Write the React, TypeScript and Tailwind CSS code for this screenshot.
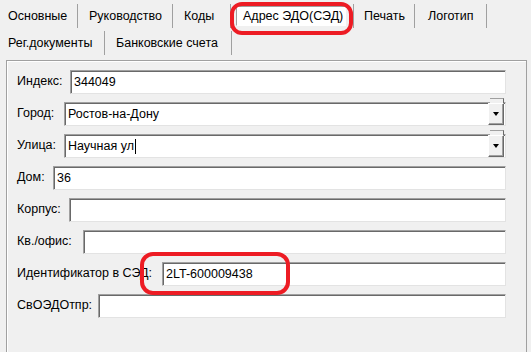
import React from "react";

type Tab = { label: string; w: number; pl: number; active?: boolean };

const row1: Tab[] = [
  { label: "Основные", w: 76, pl: 6 },
  { label: "Руководство", w: 95, pl: 11 },
  { label: "Коды", w: 58, pl: 11 },
  { label: "Адрес ЭДО(СЭД)", w: 123, pl: 12, active: true },
  { label: "Печать", w: 61, pl: 10 },
  { label: "Логотип", w: 72, pl: 13 },
];

const row2: Tab[] = [
  { label: "Рег.документы", w: 103, pl: 6 },
  { label: "Банковские счета", w: 127, pl: 11 },
];

type Field = { label: string; lw: number; value?: string; combo?: boolean; caret?: boolean };

const fields: Field[] = [
  { label: "Индекс:", lw: 53, value: "344049" },
  { label: "Город:", lw: 47, value: "Ростов-на-Дону", combo: true },
  { label: "Улица:", lw: 47, value: "Научная ул", combo: true, caret: true },
  { label: "Дом:", lw: 36, value: "36" },
  { label: "Корпус:", lw: 52 },
  { label: "Кв./офис:", lw: 66 },
  { label: "Идентификатор в СЭД:", lw: 145, value: "2LT-600009438" },
  { label: "СвОЭДОтпр:", lw: 81 },
];

function TabRow({ tabs }: { tabs: Tab[] }) {
  return (
    <div className="flex h-[24px] pl-[2px]">
      {tabs.map((t) => (
        <div
          key={t.label}
          style={{ width: t.w, paddingLeft: t.pl }}
          className="flex items-center whitespace-nowrap border-r border-[#a0a0a0]"
        >
          {t.active ? (
            <div className="flex h-[20px] w-[110px] -ml-[7px] items-center bg-white pl-[6px] border-t border-l border-[#a0a0a0] border-r border-b border-r-white border-b-white">
              {t.label}
            </div>
          ) : (
            t.label
          )}
        </div>
      ))}
    </div>
  );
}

function DropButton() {
  return (
    <div className="relative flex h-[22px] w-[16px] items-center justify-center bg-[#f0f0f0] border border-t-white border-l-white border-r-[#696969] border-b-[#696969] shadow-[inset_-1px_-1px_0_#a0a0a0]">
      <div className="absolute -top-[6px] left-[1px] h-[5px] w-[14px] bg-[#f0f0f0] border-t border-[#a0a0a0] border-r border-r-[#696969]" />
      <div className="h-0 w-0 border-l-[3px] border-r-[3px] border-t-[4px] border-l-transparent border-r-transparent border-t-black" />
    </div>
  );
}

export default function App() {
  return (
    <div className="relative h-[352px] w-[531px] overflow-hidden bg-[#f0f0f0] font-['Liberation_Sans',Arial,sans-serif] text-[12.5px] text-black">
      <div className="pt-[4px]">
        <TabRow tabs={row1} />
        <div className="h-[3px]" />
        <TabRow tabs={row2} />
      </div>

      {/* group panel */}
      <div className="ml-[6px] mr-[4px] mt-[5px] h-[320px] border border-[#a0a0a0] shadow-[inset_1px_1px_0_#fff] pt-[9px] pl-[10px] pr-[20px]">
        <div className="flex flex-col gap-[8px]">
          {fields.map((f) => (
            <div key={f.label} className="flex h-[24px] items-center">
              <div style={{ width: f.lw }} className="shrink-0 whitespace-nowrap -mt-[2px]">
                {f.label}
              </div>
              <div className="flex h-[24px] flex-1 items-center bg-white border-t border-l border-[#a0a0a0] border-r border-b border-r-[#e3e3e3] border-b-[#e3e3e3] shadow-[inset_1px_1px_0_#696969]">
                <div className="flex flex-1 items-center pl-[3px] pt-[1px]">
                  {f.value}
                  {f.caret && <span className="ml-[1px] inline-block h-[15px] w-[1px] bg-black" />}
                </div>
                {f.combo && (
                  <div className="mr-[1px]">
                    <DropButton />
                  </div>
                )}
              </div>
            </div>
          ))}
        </div>
      </div>

      {/* red highlight marks */}
      <div className="absolute left-[230px] top-[2px] h-[33px] w-[123px] rounded-[12px] border-[4px] border-[#ed1c24]" />
      <div className="absolute left-[140px] top-[252px] h-[43px] w-[150px] rounded-[13px] border-[4px] border-[#ed1c24]" />
    </div>
  );
}
